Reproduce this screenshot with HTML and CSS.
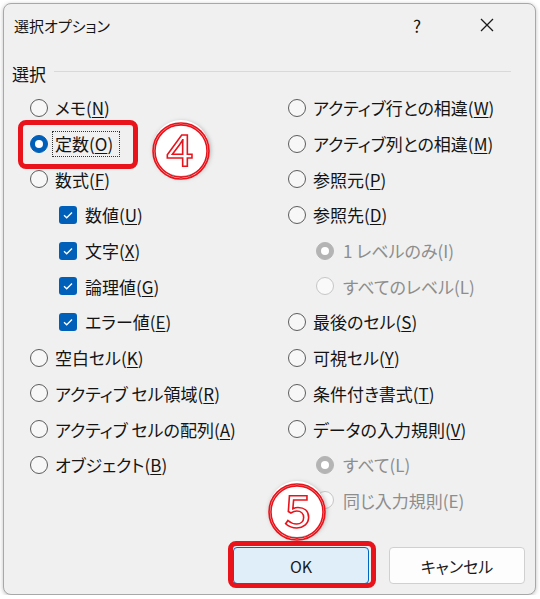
FILE: index.html
```html
<!DOCTYPE html>
<html lang="ja">
<head>
<meta charset="utf-8">
<link rel="stylesheet" href="styles.css">
</head>
<body>
<div class="dialog">
  <div class="titlebar">
    <span class="title">選択オプション</span>
    <span class="help">?</span>
    <span class="close"><svg width="14" height="14" viewBox="0 0 14 14"><path d="M1 1 L13 13 M13 1 L1 13" stroke="#1a1a1a" stroke-width="1.3" fill="none"/></svg></span>
  </div>
  <div class="group-head"><span class="group-label">選択</span><span class="group-line"></span></div>
  <div class="columns">
    <div class="col">
      <div class="row"><span class="radio"></span><span class="lbl">メモ(<u>N</u>)</span></div>
      <div class="row"><span class="radio on"></span><span class="lbl focus">定数(<u>O</u>)</span></div>
      <div class="row"><span class="radio"></span><span class="lbl">数式(<u>F</u>)</span></div>
      <div class="row sub"><span class="check"><svg width="18" height="18" viewBox="0 0 18 18"><path d="M5 9.2 L7.7 11.8 L13 6.5" stroke="#fff" stroke-width="1.3" fill="none"/></svg></span><span class="lbl">数値(<u>U</u>)</span></div>
      <div class="row sub"><span class="check"><svg width="18" height="18" viewBox="0 0 18 18"><path d="M5 9.2 L7.7 11.8 L13 6.5" stroke="#fff" stroke-width="1.3" fill="none"/></svg></span><span class="lbl">文字(<u>X</u>)</span></div>
      <div class="row sub"><span class="check"><svg width="18" height="18" viewBox="0 0 18 18"><path d="M5 9.2 L7.7 11.8 L13 6.5" stroke="#fff" stroke-width="1.3" fill="none"/></svg></span><span class="lbl">論理値(<u>G</u>)</span></div>
      <div class="row sub"><span class="check"><svg width="18" height="18" viewBox="0 0 18 18"><path d="M5 9.2 L7.7 11.8 L13 6.5" stroke="#fff" stroke-width="1.3" fill="none"/></svg></span><span class="lbl">エラー値(<u>E</u>)</span></div>
      <div class="row"><span class="radio"></span><span class="lbl">空白セル(<u>K</u>)</span></div>
      <div class="row"><span class="radio"></span><span class="lbl">アクティブ セル領域(<u>R</u>)</span></div>
      <div class="row"><span class="radio"></span><span class="lbl">アクティブ セルの配列(<u>A</u>)</span></div>
      <div class="row"><span class="radio"></span><span class="lbl">オブジェクト(<u>B</u>)</span></div>
    </div>
    <div class="col">
      <div class="row"><span class="radio"></span><span class="lbl">アクティブ行との相違(<u>W</u>)</span></div>
      <div class="row"><span class="radio"></span><span class="lbl">アクティブ列との相違(<u>M</u>)</span></div>
      <div class="row"><span class="radio"></span><span class="lbl">参照元(<u>P</u>)</span></div>
      <div class="row"><span class="radio"></span><span class="lbl">参照先(<u>D</u>)</span></div>
      <div class="row sub2 disabled"><span class="radio dis-on"></span><span class="lbl">1 レベルのみ(I)</span></div>
      <div class="row sub2 disabled"><span class="radio dis"></span><span class="lbl">すべてのレベル(L)</span></div>
      <div class="row"><span class="radio"></span><span class="lbl">最後のセル(<u>S</u>)</span></div>
      <div class="row"><span class="radio"></span><span class="lbl">可視セル(<u>Y</u>)</span></div>
      <div class="row"><span class="radio"></span><span class="lbl">条件付き書式(<u>T</u>)</span></div>
      <div class="row"><span class="radio"></span><span class="lbl">データの入力規則(<u>V</u>)</span></div>
      <div class="row sub2 disabled"><span class="radio dis-on"></span><span class="lbl">すべて(L)</span></div>
      <div class="row sub2 disabled"><span class="radio dis"></span><span class="lbl">同じ入力規則(E)</span></div>
    </div>
  </div>
  <div class="buttons">
    <button class="btn primary">OK</button>
    <button class="btn">キャンセル</button>
  </div>

  <div class="mark mark-const"></div>
  <div class="mark mark-ok"></div>
  <div class="badge badge4"><span>④</span></div>
  <div class="badge badge5"><span>⑤</span></div>
</div>
</body>
</html>
```

FILE: styles.css
```css
html, body {
  margin: 0;
  padding: 0;
  background: #ffffff;
}
body {
  font-family: "Noto Sans CJK JP", "Noto Sans", sans-serif;
  font-feature-settings: "palt";
  color: #141414;
}
.dialog {
  position: relative;
  margin: 3px 0 0 3px;
  width: 533px;
  height: 592px;
  box-sizing: border-box;
  border: 1px solid #a8a8a8;
  border-radius: 8px;
  background: #f0f0f0;
  box-shadow: 0 1px 4px rgba(0,0,0,0.25);
}
.titlebar {
  height: 42px;
  display: flex;
  align-items: center;
  padding-left: 10px;
}
.title {
  font-size: 15px;
  flex: 1;
}
.help {
  font-size: 17px;
  width: 20px;
  text-align: center;
  margin-right: 53px;
}
.close {
  display: flex;
  width: 14px;
  height: 14px;
  margin-right: 41px;
}
.group-head {
  display: flex;
  align-items: center;
  margin: 15px 24px 0 8px;
  height: 24px;
}
.group-label {
  font-size: 17px;
  margin-right: 8px;
}
.group-line {
  flex: 1;
  height: 1px;
  background: #d9d9d9;
  margin-top: -4px;
}
.columns {
  display: grid;
  grid-template-columns: 258px 1fr;
  padding-left: 26px;
  margin-top: 5px;
}
.row {
  height: 35.7px;
  display: flex;
  align-items: center;
  font-size: 17px;
  white-space: nowrap;
}
.row.sub { padding-left: 29px; }
.row.sub2 { padding-left: 28px; }
.lbl u {
  text-decoration-thickness: 1px;
  text-underline-offset: 2px;
}
.radio {
  width: 18px;
  height: 18px;
  box-sizing: border-box;
  border: 1px solid #5c5c5c;
  border-radius: 50%;
  background: #f7f7f7;
  margin-right: 7px;
  flex: none;
  position: relative;
}
.radio.on {
  background: #005fb8;
  border-color: #005fb8;
}
.radio.on::after, .radio.dis-on::after {
  content: "";
  position: absolute;
  left: 50%;
  top: 50%;
  width: 8px;
  height: 8px;
  margin: -4px 0 0 -4px;
  border-radius: 50%;
  background: #fff;
}
.radio.dis-on {
  background: #b4b4b4;
  border-color: #b4b4b4;
}
.radio.dis {
  border-color: #c6c6c6;
  background: #f9f9f9;
}
.row.sub2 .radio { margin-right: 9px; }
.disabled { color: #8d8d8d; }
.check {
  width: 18px;
  height: 18px;
  border-radius: 3px;
  background: #005fb8;
  margin-right: 8px;
  flex: none;
  display: flex;
}
.focus {
  display: inline-block;
  line-height: 20px;
  padding-right: 4px;
  outline: 1px dotted #333;
  outline-offset: 2px;
}
.buttons {
  display: flex;
  justify-content: flex-end;
  gap: 20px;
  padding-right: 10px;
  margin-top: 29px;
}
.btn {
  width: 136px;
  height: 37px;
  box-sizing: border-box;
  border: 1px solid #d0d0d0;
  border-radius: 4px;
  background: #fdfdfd;
  font-family: "Noto Sans CJK JP", "Noto Sans", sans-serif;
  font-feature-settings: "palt";
  font-size: 16px;
  color: #1a1a1a;
  padding: 0;
}
.btn.primary {
  background: #e0eef9;
  border-color: #0067c0;
}
.mark {
  position: absolute;
  border: 5px solid #e8131b;
  border-radius: 8px;
  box-sizing: border-box;
}
.mark-const {
  left: 14px;
  top: 116px;
  width: 120px;
  height: 49px;
}
.mark-ok {
  left: 224px;
  top: 537px;
  width: 148px;
  height: 47px;
}
.badge {
  position: absolute;
  width: 56px;
  height: 56px;
  border-radius: 50%;
  background: #fff;
  box-shadow: 1px 2px 5px rgba(0,0,0,0.35);
  display: flex;
  align-items: center;
  justify-content: center;
}
.badge span {
  font-family: "Noto Sans CJK JP", sans-serif;
  font-size: 60px;
  line-height: 1;
  color: #fff;
  -webkit-text-stroke: 1.6px #e8131b;
}
.badge4 { left: 149px; top: 116px; }
.badge5 { left: 265px; top: 477px; }
```
